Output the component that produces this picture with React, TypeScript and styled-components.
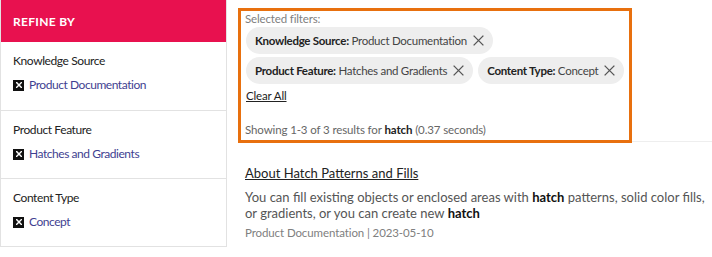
import React from "react";
import styled, { createGlobalStyle } from "styled-components";

const GlobalStyle = createGlobalStyle`
	body {
		margin: 0;
		background: #ffffff;
		font-family: Lato, "Noto Sans", sans-serif;
		color: #222222;
	}
`;

const Page = styled.div`
	display: flex;
	align-items: flex-start;
	width: 712px;
	height: 257px;
	overflow: hidden;
`;

const Sidebar = styled.aside`
	width: 225px;
	flex-shrink: 0;
	border: 1px solid #e2e2e2;
	border-top: none;
`;

const SidebarHeader = styled.div`
	height: 42px;
	background: #e8114f;
	color: #ffffff;
	font-size: 12px;
	font-weight: 700;
	letter-spacing: 0.3px;
	display: flex;
	align-items: center;
	padding-left: 12px;
`;

const FacetSection = styled.section`
	padding: 10px 12px 15px;
	border-top: 1px solid #e2e2e2;
	&:first-of-type {
		border-top: none;
		padding-bottom: 16px;
	}
`;

const FacetTitle = styled.div`
	font-size: 12px;
	letter-spacing: -0.4px;
	line-height: 18px;
	color: #222222;
	margin-bottom: 6px;
`;

const FacetItem = styled.a`
	display: flex;
	align-items: center;
	gap: 5px;
	font-size: 12px;
	letter-spacing: -0.45px;
	line-height: 18px;
	color: #3f3f91;
	text-decoration: none;
`;

const RemoveBox = styled.span`
	width: 11px;
	height: 11px;
	background: #111111;
	display: inline-flex;
	align-items: center;
	justify-content: center;
`;

const Main = styled.main`
	flex: 1;
	padding-top: 8px;
	padding-left: 11px;
`;

const Header = styled.div`
	border-bottom: 1px solid #eeeeee;
`;

const Highlight = styled.div`
	width: 382px;
	border: 3px solid #e8700e;
	margin-bottom: -2px;
	padding: 1px 2px 3px 4px;
	position: relative;
	background: #ffffff;
`;

const Muted = styled.div`
	font-size: 11.5px;
	letter-spacing: -0.15px;
	line-height: 14px;
	color: #808080;
`;

const ChipList = styled.div`
	display: flex;
	flex-wrap: wrap;
	gap: 3px 5px;
	margin-top: 1px;
	padding-left: 1px;
`;

const Chip = styled.span`
	display: inline-flex;
	align-items: center;
	gap: 6px;
	height: 27px;
	padding: 0 9px;
	border-radius: 14px;
	background: #eeeeee;
	font-size: 11.5px;
	letter-spacing: -0.28px;
	color: #444444;
	b {
		color: #222222;
		font-weight: 700;
	}
`;

const ClearAll = styled.a`
	display: inline-block;
	margin-top: 4px;
	margin-left: 1px;
	font-size: 11.5px;
	letter-spacing: -0.15px;
	line-height: 14px;
	color: #222222;
	text-decoration: underline;
`;

const Summary = styled(Muted)`
	margin-top: 20px;
	letter-spacing: -0.12px;
	color: #666666;
	b {
		color: #222222;
		font-weight: 700;
	}
`;

const Result = styled.article`
	padding: 20px 0 0 7px;
`;

const ResultTitle = styled.a`
	display: inline-block;
	font-size: 13px;
	line-height: 18px;
	color: #222222;
	text-decoration: underline;
`;

const ResultBody = styled.p`
	margin: 7px 0 0;
	font-size: 13px;
	line-height: 16px;
	color: #555555;
	b {
		color: #111111;
		font-weight: 700;
	}
`;

const ResultMeta = styled.div`
	margin-top: 5px;
	font-size: 11.5px;
	letter-spacing: -0.1px;
	line-height: 14px;
	color: #808080;
`;

const CrossIcon: React.FC<{ size: number; color: string; width?: number }> = ({ size, color, width = 1.2 }) => (
	<svg width={size} height={size} viewBox="0 0 10 10">
		<path d="M1 1 L9 9 M9 1 L1 9" stroke={color} strokeWidth={width} strokeLinecap="square" />
	</svg>
);

const facets = [
	{ title: "Knowledge Source", value: "Product Documentation" },
	{ title: "Product Feature", value: "Hatches and Gradients" },
	{ title: "Content Type", value: "Concept" },
];

const App: React.FC = () => (
	<>
		<GlobalStyle />
		<Page>
			<Sidebar>
				<SidebarHeader>REFINE BY</SidebarHeader>
				{facets.map((facet) => (
					<FacetSection key={facet.title}>
						<FacetTitle>{facet.title}</FacetTitle>
						<FacetItem href="#">
							<RemoveBox>
								<CrossIcon size={6} color="#ffffff" width={2.4} />
							</RemoveBox>
							{facet.value}
						</FacetItem>
					</FacetSection>
				))}
			</Sidebar>
			<Main>
				<Header>
					<Highlight>
						<Muted>Selected filters:</Muted>
						<ChipList>
							{facets.map((facet) => (
								<Chip key={facet.title}>
									<span>
										<b>{facet.title}:</b> {facet.value}
									</span>
									<CrossIcon size={11} color="#555555" />
								</Chip>
							))}
						</ChipList>
						<ClearAll href="#">Clear All</ClearAll>
						<Summary>
							Showing 1-3 of 3 results for <b>hatch</b> (0.37 seconds)
						</Summary>
					</Highlight>
				</Header>
				<Result>
					<ResultTitle href="#">About Hatch Patterns and Fills</ResultTitle>
					<ResultBody>
						You can fill existing objects or enclosed areas with <b>hatch</b> patterns, solid color fills,
						or gradients, or you can create new <b>hatch</b>
					</ResultBody>
					<ResultMeta>Product Documentation | 2023-05-10</ResultMeta>
				</Result>
			</Main>
		</Page>
	</>
);

export default App;
